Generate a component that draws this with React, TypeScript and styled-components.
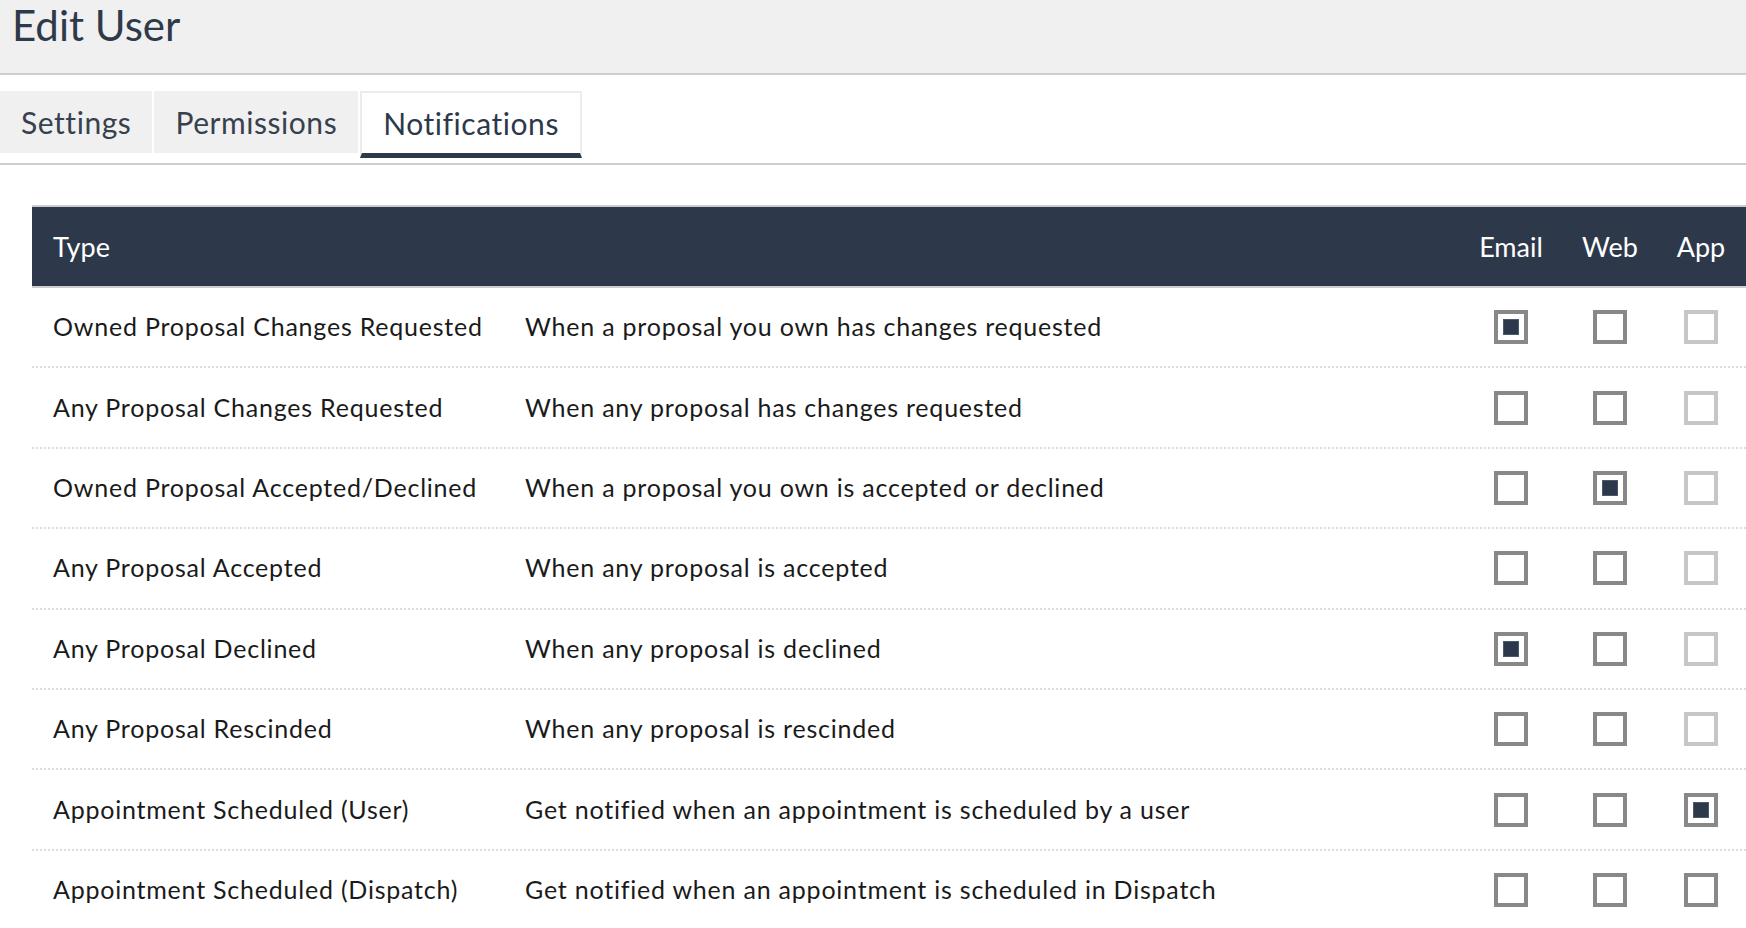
import React from 'react';
import styled, { createGlobalStyle, css } from 'styled-components';

const GlobalStyle = createGlobalStyle`
    html, body {
        margin: 0;
        padding: 0;
        background: #fff;
        font-family: Lato, 'Liberation Sans', sans-serif;
    }
    * {
        box-sizing: border-box;
    }
`;

type Channel = 'off' | 'on' | 'disabled';

type NotificationRow = {
    type: string;
    description: string;
    email: Channel;
    web: Channel;
    app: Channel;
};

const rows: NotificationRow[] = [
    {
        type: 'Owned Proposal Changes Requested',
        description: 'When a proposal you own has changes requested',
        email: 'on',
        web: 'off',
        app: 'disabled',
    },
    {
        type: 'Any Proposal Changes Requested',
        description: 'When any proposal has changes requested',
        email: 'off',
        web: 'off',
        app: 'disabled',
    },
    {
        type: 'Owned Proposal Accepted/Declined',
        description: 'When a proposal you own is accepted or declined',
        email: 'off',
        web: 'on',
        app: 'disabled',
    },
    {
        type: 'Any Proposal Accepted',
        description: 'When any proposal is accepted',
        email: 'off',
        web: 'off',
        app: 'disabled',
    },
    {
        type: 'Any Proposal Declined',
        description: 'When any proposal is declined',
        email: 'on',
        web: 'off',
        app: 'disabled',
    },
    {
        type: 'Any Proposal Rescinded',
        description: 'When any proposal is rescinded',
        email: 'off',
        web: 'off',
        app: 'disabled',
    },
    {
        type: 'Appointment Scheduled (User)',
        description: 'Get notified when an appointment is scheduled by a user',
        email: 'off',
        web: 'off',
        app: 'on',
    },
    {
        type: 'Appointment Scheduled (Dispatch)',
        description: 'Get notified when an appointment is scheduled in Dispatch',
        email: 'off',
        web: 'off',
        app: 'off',
    },
];

const tabs = ['Settings', 'Permissions', 'Notifications'];

const App = () => {
    return (
        <Page>
            <GlobalStyle />
            <TitleBar>
                <Title>Edit User</Title>
            </TitleBar>
            <TabBar>
                {tabs.map((tab) => (
                    <Tab key={tab} $active={tab === 'Notifications'}>
                        {tab}
                    </Tab>
                ))}
            </TabBar>
            <Table>
                <HeadRow>
                    <HeadCell>Type</HeadCell>
                    <HeadCell />
                    <HeadCell $center>Email</HeadCell>
                    <HeadCell $center>Web</HeadCell>
                    <HeadCell $center>App</HeadCell>
                </HeadRow>
                {rows.map((row) => (
                    <BodyRow key={row.type}>
                        <TypeCell>{row.type}</TypeCell>
                        <DescCell>{row.description}</DescCell>
                        <BoxCell>
                            <Check $state={row.email} />
                        </BoxCell>
                        <BoxCell>
                            <Check $state={row.web} />
                        </BoxCell>
                        <BoxCell>
                            <Check $state={row.app} />
                        </BoxCell>
                    </BodyRow>
                ))}
            </Table>
        </Page>
    );
};

export default App;

const Page = styled.div`
    width: 100%;
    min-height: 100vh;
    background: #fff;
`;

const TitleBar = styled.header`
    height: 75px;
    background: #f0f0f0;
    border-bottom: 2px solid #cdcdcd;
    padding-left: 12px;
`;

const Title = styled.h1`
    margin: 0;
    font-size: 42px;
    font-weight: 400;
    line-height: 50px;
    color: #2e3a4a;
`;

const TabBar = styled.nav`
    display: flex;
    align-items: flex-start;
    gap: 2px;
    padding-top: 16px;
    height: 90px;
    border-bottom: 2px solid #cdcdcd;
`;

const Tab = styled.div<{ $active?: boolean }>`
    height: 62px;
    display: flex;
    align-items: center;
    padding: 0 21px;
    font-size: 30px;
    letter-spacing: 0.55px;
    color: #37414e;
    background: #f0f0f0;

    ${({ $active }) =>
        $active &&
        css`
            height: 67px;
            background: #fff;
            color: #2d394a;
            border: 2px solid #ececec;
            border-bottom: 5px solid #2d394a;
        `}
`;

const Table = styled.div`
    margin: 40px 0 0 32px;
`;

const columns = css`
    display: grid;
    grid-template-columns: 470px 1fr 106px 92px 90px;
    align-items: center;
`;

const HeadRow = styled.div`
    ${columns};
    height: 83px;
    background: #2d394a;
    border-top: 2px solid #cdcdcd;
    border-bottom: 2px solid #cdcdcd;
`;

const HeadCell = styled.div<{ $center?: boolean }>`
    font-size: 27px;
    color: #fff;
    padding-left: ${({ $center }) => ($center ? '0' : '21px')};
    text-align: ${({ $center }) => ($center ? 'center' : 'left')};
`;

const BodyRow = styled.div`
    ${columns};
    height: 80.4px;
    border-bottom: 2px dotted #dcdcdc;
`;

const TypeCell = styled.div`
    padding-left: 21px;
    padding-bottom: 2px;
    font-size: 25px;
    letter-spacing: 0.78px;
    color: #1a1a1a;
    white-space: nowrap;
`;

const DescCell = styled(TypeCell)`
    padding-left: 23px;
`;

const BoxCell = styled.div`
    display: flex;
    justify-content: center;
`;

const Check = styled.span<{ $state: Channel }>`
    width: 34px;
    height: 34px;
    display: flex;
    align-items: center;
    justify-content: center;
    border: 4px solid ${({ $state }) => ($state === 'disabled' ? '#c6c6c6' : '#888')};
    background: #fff;

    &::after {
        content: '';
        width: 14px;
        height: 14px;
        background: #2d394a;
        border: 1px solid #4b596a;
        display: ${({ $state }) => ($state === 'on' ? 'block' : 'none')};
    }
`;
